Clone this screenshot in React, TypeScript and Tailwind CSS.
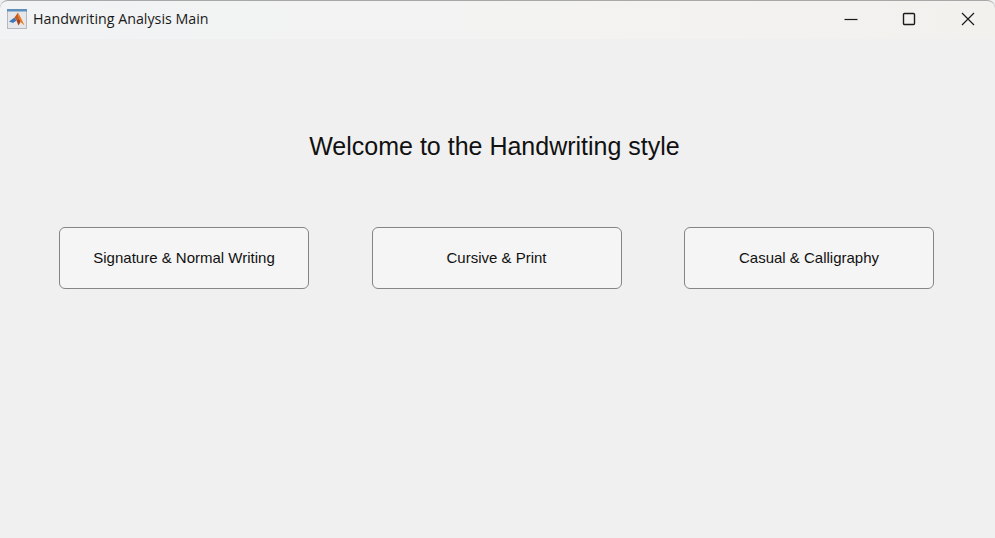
export default function App() {
  const labels = ["Signature & Normal Writing", "Cursive & Print", "Casual & Calligraphy"];
  return (
    <div className="relative w-[995px] h-[538px] overflow-hidden bg-[#f0f0f0] flex flex-col font-['Liberation_Sans',sans-serif]">
      <div className="h-[39px] shrink-0 flex items-center rounded-t-[8px] border-t border-[#a8a8a8] bg-gradient-to-r from-[#f1f3f4] via-[#f3f3f2] to-[#f3f1ee] pb-[2px]">
        <svg width="20" height="20" viewBox="0 0 20 20" className="ml-[7px] shrink-0">
          <rect x="0.5" y="0.5" width="19" height="19" fill="#e6e7ea" stroke="#b5b8bc" />
          <rect x="0" y="0" width="20" height="2.5" fill="#5f8fbd" />
          <path d="M2 12.5 L7.5 8.5 L9.5 11.5 L6 14 Z" fill="#3f78b8" />
          <path d="M7.5 8.5 L11 3.5 L12 9 L9.5 11.5 Z" fill="#c9591f" />
          <path d="M11 3.5 L13.5 8 L17.5 16.5 L13.5 13 L12 9 Z" fill="#ea7d1c" />
          <path d="M9.5 11.5 L12 9 L13.5 13 L11.5 16.5 Z" fill="#a8401a" />
        </svg>
        <span className="ml-[6px] text-[14.25px] leading-none text-[#1a1a1a] font-['Open_Sans',sans-serif]">Handwriting Analysis Main</span>
        <div className="ml-auto flex items-center h-full text-[#1a1a1a]">
          <svg width="14" height="14" viewBox="0 0 14 14" className="mr-[44px]"><path d="M0.5 7.5H13.5" stroke="currentColor" strokeWidth="1.2" /></svg>
          <svg width="14" height="14" viewBox="0 0 14 14" className="mr-[45px]"><rect x="1.5" y="1.5" width="11" height="11" rx="1" fill="none" stroke="currentColor" strokeWidth="1.4" /></svg>
          <svg width="14" height="14" viewBox="0 0 14 14" className="mr-[20px]"><path d="M1 1L13 13M13 1L1 13" stroke="currentColor" strokeWidth="1.2" /></svg>
        </div>
      </div>
      <h1 className="mt-[91px] ml-[-6px] text-center text-[25px] leading-[32px] font-normal text-[#111]">Welcome to the Handwriting style</h1>
      <div className="mt-[65px] ml-[59px] w-[875px] flex justify-between">
        {labels.map((l) => (
          <button key={l} className="w-[250px] h-[62px] rounded-[6px] border border-[#858585] bg-[#f5f5f5] text-[15px] text-[#111]">
            {l}
          </button>
        ))}
      </div>
    </div>
  );
}
